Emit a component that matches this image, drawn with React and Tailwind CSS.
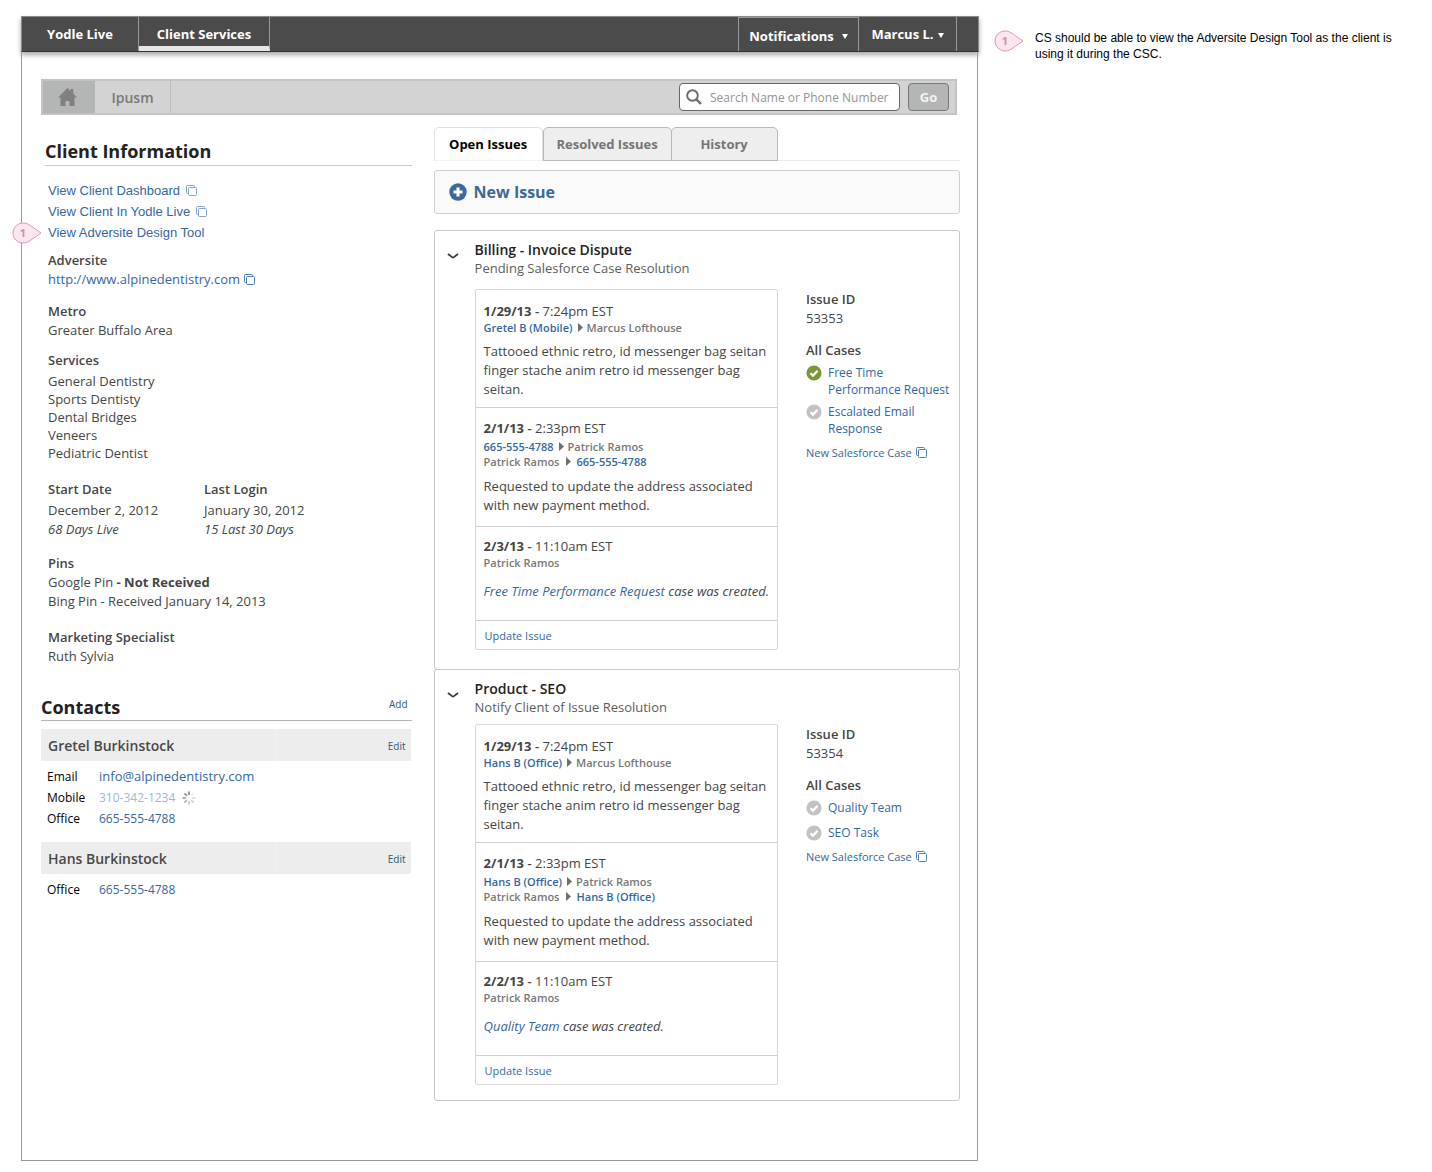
import React from "react";

const link = "text-[#34679f] hover:underline";

function CopyIcon({ className = "" }) {
  return (
    <svg viewBox="0 0 11 11" className={`inline-block h-[11px] w-[11px] shrink-0 ${className}`} fill="none" stroke="#4f80b3" aria-hidden="true">
      <path d="M2.5 8.5H1.5a1 1 0 0 1-1-1v-6a1 1 0 0 1 1-1h6a1 1 0 0 1 1 1v1" />
      <rect x="2.5" y="2.5" width="8" height="8" rx="1" />
    </svg>
  );
}

function Marker({ n, className = "" }) {
  return (
    <span className={`flex h-[22px] w-[30px] shrink-0 items-center ${className}`}>
      <svg viewBox="0 0 30 22" className="h-[22px] w-[30px]" aria-hidden="true">
        <path d="M11 1C5.5 1 1 5.5 1 11s4.500 10 10 10c3.500 0 5.500-1.200 8-3l10-7-10-7c-2.500-1.800-4.500-3-8-3z" fill="#f9e6ef" stroke="#e593bf" />
        <text x="11" y="15" textAnchor="middle" fontSize="11" fontWeight="700" fill="#e184b5" fontFamily="Open Sans, sans-serif">{n}</text>
      </svg>
    </span>
  );
}

function CheckIcon({ done }) {
  return (
    <svg viewBox="0 0 16 16" className="mt-px h-4 w-4 shrink-0" role="img" aria-label={done ? "Complete" : "Open"}>
      <circle cx="8" cy="8" r="7.6" fill={done ? "#7c963c" : "#c2c2c2"} />
      <path d="M4.5 8.2 7 10.6l4.6-4.8" fill="none" stroke="#fff" strokeWidth="2.2" />
    </svg>
  );
}

function Caret() {
  return (
    <svg viewBox="0 0 6 5" className="h-[5px] w-[6px]" aria-hidden="true">
      <path d="M0 0h6L3 5z" fill="#fff" />
    </svg>
  );
}

function Arrow({ className }) {
  return (
    <svg viewBox="0 0 5 9" className={`h-[9px] w-[5px] ${className}`} aria-hidden="true">
      <path d="M0 0 5 4.5 0 9z" fill="#6e6e6e" />
    </svg>
  );
}

function Spinner() {
  const rays = ["#8a8a8a", "#f0f0f0", "#dcdcdc", "#cfcfcf", "#c4c4c4", "#b0b0b0", "#a0a0a0", "#8f8f8f"];
  return (
    <svg viewBox="-7 -7 14 14" className="h-[14px] w-[14px]" role="img" aria-label="Calling">
      {rays.map((c, i) => (
        <path key={i} d="M0-3V-6.5" stroke={c} strokeWidth="1.7" transform={`rotate(${i * 45})`} />
      ))}
    </svg>
  );
}

function Header() {
  return (
    <header className="flex h-9 items-stretch border border-[#8a8a8a] border-b-[#333] bg-[#4b4b4b] text-[13px] font-bold text-white shadow-[0_3px_5px_rgba(0,0,0,0.35)]">
      <nav className="flex">
        <a href="#live" className="flex w-[117px] items-center justify-center border-r border-[#999] pt-[2px]">Yodle Live</a>
        <a href="#services" className="flex w-[131px] items-center justify-center border-r border-b-[5px] border-r-[#999] border-b-[#e6e6e6] pt-[6px]">Client Services</a>
      </nav>
      <div className="ml-auto flex pr-[21px]">
        <button type="button" className="flex w-[121px] items-center justify-center gap-2 border border-[#999] border-b-0 pt-1">
          Notifications <Caret />
        </button>
        <button type="button" className="flex w-[98px] items-center justify-center gap-1 border-r border-[#999] pt-[2px]">
          Marcus L. <Caret />
        </button>
      </div>
    </header>
  );
}

function SearchBar() {
  return (
    <div className="flex h-9 items-stretch border-2 border-[#c3c3c3] bg-[#d3d3d3]">
      <a href="#home" aria-label="Home" className="flex w-[52px] items-center justify-center bg-[#b3b6b5] pr-1">
        <svg viewBox="0 0 19 18" className="h-[18px] w-[19px]" fill="#808080" aria-hidden="true">
          <path d="M9.5 0 0 9.5h2.500V18H7.500v-5h4v5h5V9.500H19L15.300 5.800V1h-2.800v2z" />
        </svg>
      </a>
      <a href="#ipusm" className="flex w-[76px] items-center justify-center border-r border-[#bdbdbd] text-[14px] font-semibold text-[#787878]">Ipusm</a>
      <form className="ml-auto flex items-center gap-2 pr-[6px]" onSubmit={(e) => e.preventDefault()}>
        <label className="flex h-7 w-[221px] items-center gap-2 rounded border border-[#666] bg-white pl-[6px]">
          <svg viewBox="0 0 16 16" className="h-4 w-4 shrink-0" fill="none" stroke="#6b6b6b" aria-hidden="true">
            <circle cx="6.5" cy="6.5" r="5.3" strokeWidth="1.9" />
            <path d="m10.500 10.500 4.500 4.500" strokeWidth="2.4" />
          </svg>
          <input type="text" aria-label="Search name or phone number" placeholder="Search Name or Phone Number" className="h-full min-w-0 flex-1 bg-transparent text-[12px] text-[#444] outline-none placeholder:text-[#949494]" />
        </label>
        <button type="submit" className="h-7 w-[41px] rounded border border-[#777] bg-[#b3b6b5] pt-[2px] text-[13px] font-bold text-[#f4f4f4]">Go</button>
      </form>
    </div>
  );
}

function Field({ label, children, className = "" }) {
  return (
    <div className={className}>
      <h3 className="font-semibold">{label}</h3>
      {children}
    </div>
  );
}

function Contact({ name, rows, className = "" }) {
  return (
    <section className={className}>
      <div className="mr-px flex h-8 items-stretch bg-[#ededed] pl-[7px]">
        <h3 className="flex flex-1 items-center text-[14px] font-semibold text-[#484848]">{name}</h3>
        <div className="flex w-[136px] items-center justify-end border-l border-[#f3f3f3] pt-[2px] pr-[5px]">
          <button type="button" className="text-[10px] text-[#2c5685]">Edit</button>
        </div>
      </div>
      <dl className="grid grid-cols-[52px_1fr] pt-[5px] pl-[6px] text-[12px] leading-[21px] text-black">
        {rows.map(([k, v, busy]) => (
          <React.Fragment key={k}>
            <dt>{k}</dt>
            <dd className="flex items-center gap-[7px]">
              <a href="#contact" className={busy ? "text-[#9ebad3]" : k === "Email" ? "text-[13px] text-[#34679f]" : "text-[#34679f]"}>{v}</a>
              {busy && <Spinner />}
            </dd>
          </React.Fragment>
        ))}
      </dl>
    </section>
  );
}

function ClientInfo() {
  return (
    <div className="text-[13px] leading-[19px] text-[#454545]">
      <h2 className="ml-1 border-b border-[#c8c8c8] pt-3 pb-[2px] text-[18px] leading-6 font-bold text-[#222]">Client Information</h2>
      <div className="pl-[7px]">
        <ul className="mt-[14px] font-['Liberation_Sans',Arial,sans-serif] leading-[21px]">
          <li className="flex items-center gap-[6px]"><a href="#dashboard" className={link}>View Client Dashboard</a><CopyIcon className="opacity-70" /></li>
          <li className="flex items-center gap-[6px]"><a href="#live" className={link}>View Client In Yodle Live</a><CopyIcon className="opacity-70" /></li>
          <li className="relative">
            <Marker n="1" className="absolute top-0 -left-9" />
            <a href="#design" className={link}>View Adversite Design Tool</a>
          </li>
        </ul>
        <Field label="Adversite" className="mt-2">
          <p className="flex items-center gap-1"><a href="#site" className={link}>http://www.alpinedentistry.com</a><CopyIcon /></p>
        </Field>
        <Field label="Metro" className="mt-[13px]"><p>Greater Buffalo Area</p></Field>
        <Field label="Services" className="mt-[11px]">
          <ul className="mt-[2px] leading-[18px]">
            <li>General Dentistry</li>
            <li>Sports Dentisty</li>
            <li>Dental Bridges</li>
            <li>Veneers</li>
            <li>Pediatric Dentist</li>
          </ul>
        </Field>
        <div className="mt-[18px] flex">
          <Field label="Start Date" className="w-[156px]">
            <p className="mt-[2px]">December 2, 2012</p>
            <p className="italic">68 Days Live</p>
          </Field>
          <Field label="Last Login">
            <p className="mt-[2px]">January 30, 2012</p>
            <p className="italic leading-[18px]">15 Last 30 Days</p>
          </Field>
        </div>
        <Field label="Pins" className="mt-[15px]">
          <p>Google Pin <strong className="font-bold">- Not Received</strong></p>
          <p>Bing Pin - Received January 14, 2013</p>
        </Field>
        <Field label="Marketing Specialist" className="mt-[17px]"><p>Ruth Sylvia</p></Field>
      </div>
      <div className="mt-7 flex items-start justify-between border-b border-[#b5b5b5] pr-1">
        <h2 className="text-[18px] leading-[26px] font-bold text-[#222]">Contacts</h2>
        <button type="button" className="text-[10px] leading-5 text-[#2c5685]">Add</button>
      </div>
      <Contact name="Gretel Burkinstock" className="mt-2" rows={[["Email", "info@alpinedentistry.com"], ["Mobile", "310-342-1234", true], ["Office", "665-555-4788"]]} />
      <Contact name="Hans Burkinstock" className="mt-[13px]" rows={[["Office", "665-555-4788"]]} />
    </div>
  );
}

const isClient = (name) => /[0-9(]/.test(name);

function Person({ name }) {
  return isClient(name) ? <a href="#contact" className={link}>{name}</a> : <span className="text-[#777]">{name}</span>;
}

function Entry({ date, time, people, className, peopleClass = "", children }) {
  return (
    <article className={`border-b border-[#cfcfcf] px-2 ${className}`}>
      <p className="leading-[18px]"><strong className="font-bold">{date}</strong> <span className="font-semibold">-</span> {time}</p>
      <div className={`text-[11px] leading-[15px] font-semibold ${peopleClass}`}>
        {people.map(([from, to]) => (
          <p key={from} className="flex items-center">
            <Person name={from} />
            {to && <><Arrow className={isClient(to) ? "mr-[5px] ml-[7px]" : "mr-1 ml-[5px]"} /><Person name={to} /></>}
          </p>
        ))}
      </div>
      {children}
    </article>
  );
}

function Issue({ title, status, id, client, caller, closing, cases, className, asideClass }) {
  return (
    <section className={`flex rounded-[3px] border border-[#c9c9c9] pr-[6px] pl-3 ${className}`}>
      <button type="button" aria-label="Collapse issue" className="mt-[13px] flex h-2 w-7 shrink-0">
        <svg viewBox="0 0 12 7" className="h-[7px] w-3" fill="none" stroke="#3c3c3c" strokeWidth="1.8" aria-hidden="true">
          <path d="M.8 1.200c3 1 3.700 3.300 5.200 3.300s2.200-2.300 5.200-3.300" />
        </svg>
      </button>
      <div className="min-w-0 flex-1">
        <h3 className="text-[14px] leading-[19px] font-semibold text-[#222]">{title}</h3>
        <p className="text-[13px] leading-[18px] text-[#5c5c5c]">{status}</p>
        <div className={`flex gap-7 ${asideClass}`}>
          <div className="min-w-0 flex-1 rounded-[2px] border border-[#d8d8d8] text-[13px] leading-[19px] text-[#454545]">
            <Entry date="1/29/13" time="7:24pm EST" people={[[caller, "Marcus Lofthouse"]]} className="pt-3 pb-2">
              <p className="mt-[7px]">Tattooed ethnic retro, id messenger bag seitan finger stache anim retro id messenger bag seitan.</p>
            </Entry>
            <Entry date="2/1/13" time="2:33pm EST" people={[[client, "Patrick Ramos"], ["Patrick Ramos", client]]} className="pt-[11px] pb-[11px]" peopleClass="mt-[2px]">
              <p className="mt-2">Requested to update the address associated with new payment method.</p>
            </Entry>
            <Entry date={closing.date} time="11:10am EST" people={[["Patrick Ramos"]]} className="pt-[10px] pb-[19px]">
              <p className="mt-3 whitespace-nowrap italic"><a href="#case" className={link}>{closing.item}</a> case was created.</p>
            </Entry>
            <div className="px-[9px] pt-[5px] pb-1 text-[11px]">
              <button type="button" className={link}>Update Issue</button>
            </div>
          </div>
          <aside className="w-[147px] shrink-0 pt-px text-[12px] leading-[19px] text-[#454545]">
            <h4 className="text-[13px] font-semibold">Issue ID</h4>
            <p className="text-[13px]">{id}</p>
            <h4 className="mt-[13px] text-[13px] font-semibold">All Cases</h4>
            {cases}
            <p className="mt-[6px] flex items-center gap-1 text-[11px]"><a href="#new" className={link}>New Salesforce Case</a><CopyIcon /></p>
          </aside>
        </div>
      </div>
    </section>
  );
}

function Case({ done, className, children }) {
  return (
    <div className={`flex gap-[6px] leading-[17px] ${className}`}>
      <CheckIcon done={done} />
      <a href="#case" className={link}>{children}</a>
    </div>
  );
}

function Issues() {
  return (
    <div>
      <div role="tablist" className="flex h-[34px] border-b border-[#ebebeb] text-[13px] font-bold text-[#757575]">
        <button type="button" role="tab" aria-selected="true" className="-mb-px w-[109px] rounded-t-[5px] border border-[#e0e0e0] border-b-[#f3f3f3] bg-white pt-[2px] text-black">Open Issues</button>
        <button type="button" role="tab" aria-selected="false" className="-mb-px w-[129px] rounded-t-[5px] border border-[#b8b8b8] bg-[#eee] pt-[2px]">Resolved Issues</button>
        <button type="button" role="tab" aria-selected="false" className="-mb-px -ml-px w-[107px] rounded-t-[5px] border border-[#b8b8b8] bg-[#eee] pt-[2px]">History</button>
      </div>
      <button type="button" className="mt-[9px] flex h-11 w-full items-center gap-[7px] rounded-[3px] border border-[#cfcfcf] bg-[#fafafa] pl-[14px] text-[16px] font-bold text-[#3c6a98]">
        <svg viewBox="0 0 18 18" className="h-[18px] w-[18px]" aria-hidden="true">
          <circle cx="9" cy="9" r="8.7" fill="#3c6a98" />
          <path d="M9 4.500v9M4.500 9h9" stroke="#fff" strokeWidth="3" />
        </svg>
        New Issue
      </button>
      <div className="mt-4">
        <Issue
          title="Billing - Invoice Dispute"
          status="Pending Salesforce Case Resolution"
          id="53353"
          caller="Gretel B (Mobile)"
          client="665-555-4788"
          closing={{ date: "2/3/13", item: "Free Time Performance Request" }}
          className="pt-[9px] pb-[19px]"
          asideClass="mt-3"
          cases={
            <>
              <Case done className="mt-1">Free Time<br />Performance Request</Case>
              <Case className="mt-[5px]">Escalated Email<br />Response</Case>
            </>
          }
        />
        <Issue
          title="Product - SEO"
          status="Notify Client of Issue Resolution"
          id="53354"
          caller="Hans B (Office)"
          client="Hans B (Office)"
          closing={{ date: "2/2/13", item: "Quality Team" }}
          className="-mt-px pt-[9px] pb-[15px]"
          asideClass="mt-2"
          cases={
            <>
              <Case className="mt-1">Quality Team</Case>
              <Case className="mt-2">SEO Task</Case>
            </>
          }
        />
      </div>
    </div>
  );
}

export default function App() {
  return (
    <div className="flex min-h-screen items-start bg-white pt-4 pb-[11px] pl-[21px] font-['Open_Sans',sans-serif]">
      <div className="min-w-0 flex-1">
        <Header />
        <main className="mr-px border border-t-0 border-[#999] pt-[27px] pr-[17px] pb-[59px] pl-[19px]">
          <div className="pr-[3px]"><SearchBar /></div>
          <div className="mt-3 grid grid-cols-[minmax(0,371fr)_minmax(0,527fr)] gap-[22px]">
            <ClientInfo />
            <Issues />
          </div>
        </main>
      </div>
      <aside className="flex w-[453px] shrink-0 items-start gap-[11px] pt-[14px] pr-8 pl-[15px]">
        <Marker n="1" />
        <p className="font-['Liberation_Sans',Arial,sans-serif] text-[12px] leading-4 text-black">CS should be able to view the Adversite Design Tool as the client is using it during the CSC.</p>
      </aside>
    </div>
  );
}
